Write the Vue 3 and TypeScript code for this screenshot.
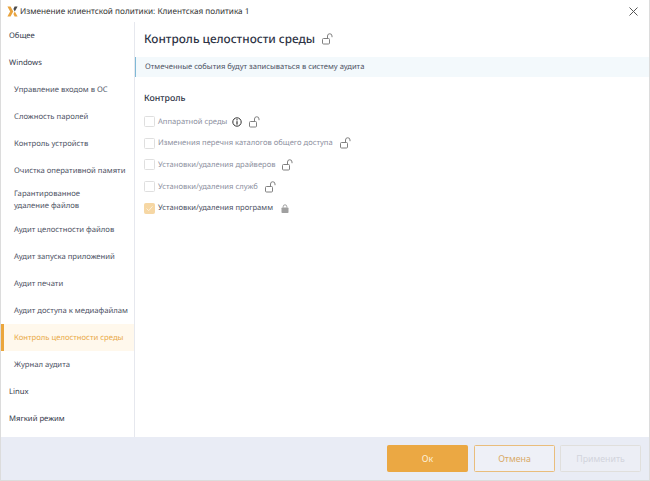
<script setup lang="ts">
interface NavItem { label: string; sub?: boolean; active?: boolean; tall?: boolean }
const nav: NavItem[] = [
  { label: 'Общее' },
  { label: 'Windows' },
  { label: 'Управление входом в ОС', sub: true },
  { label: 'Сложность паролей', sub: true },
  { label: 'Контроль устройств', sub: true },
  { label: 'Очистка оперативной памяти', sub: true },
  { label: 'Гарантированное удаление файлов', sub: true, tall: true },
  { label: 'Аудит целостности файлов', sub: true },
  { label: 'Аудит запуска приложений', sub: true },
  { label: 'Аудит печати', sub: true },
  { label: 'Аудит доступа к медиафайлам', sub: true },
  { label: 'Контроль целостности среды', sub: true, active: true },
  { label: 'Журнал аудита', sub: true },
  { label: 'Linux' },
  { label: 'Мягкий режим' },
]
const checks = [
  { label: 'Аппаратной среды', info: true },
  { label: 'Изменения перечня каталогов общего доступа' },
  { label: 'Установки/удаления драйверов' },
  { label: 'Установки/удаления служб' },
  { label: 'Установки/удаления программ', checked: true },
]
</script>

<template>
  <div class="win">
    <header class="titlebar">
      <svg class="logo" width="11" height="11" viewBox="0 0 13 13">
        <path d="M0.5 0.5H4.2L7.4 6.5L4.2 12.5H0.5L3.7 6.5Z" fill="#e8a33d" />
        <path d="M12.5 0.5H9L7.6 3.4L9.2 6.5Z" fill="#4a4a4a" />
        <path d="M12.5 12.5H9L7.6 9.6L9.2 6.5Z" fill="#e8a33d" />
      </svg>
      <span class="title">Изменение клиентской политики: Клиентская политика 1</span>
      <svg class="close" width="9" height="9" viewBox="0 0 9 9">
        <path d="M0.5 0.5L8.5 8.5M8.5 0.5L0.5 8.5" stroke="#555" stroke-width="1" fill="none" />
      </svg>
    </header>
    <div class="body">
      <nav class="side">
        <div
          v-for="n in nav"
          :key="n.label"
          class="item"
          :class="{ sub: n.sub, active: n.active, tall: n.tall }"
        >
          <span>{{ n.label }}</span>
        </div>
      </nav>
      <main class="main">
        <div class="head">
          <h1>Контроль целостности среды</h1>
          <svg class="lock big" width="12" height="12" viewBox="0 0 12 12">
            <rect x="0.5" y="5.5" width="7" height="5.5" rx="1" fill="none" stroke="#808080" />
            <path d="M5.5 5.5V3A2.2 2.2 0 0 1 10 3V4.2" fill="none" stroke="#808080" />
          </svg>
        </div>
        <div class="notice">Отмеченные события будут записываться в систему аудита</div>
        <h2>Контроль</h2>
        <ul class="list">
          <li v-for="c in checks" :key="c.label" class="row">
            <span class="box" :class="{ on: c.checked }">
              <svg v-if="c.checked" width="9" height="9" viewBox="0 0 9 9">
                <path d="M1.5 4.5L3.7 6.7L7.5 2.3" fill="none" stroke="#fdf0da" stroke-width="1" />
              </svg>
            </span>
            <span class="lbl" :class="{ dark: c.checked }">{{ c.label }}</span>
            <svg v-if="c.info" class="info" width="10" height="10" viewBox="0 0 10 10">
              <circle cx="5" cy="5" r="4.2" fill="none" stroke="#333" stroke-width="1" />
              <rect x="4.4" y="2.2" width="1.2" height="1.2" fill="#333" />
              <rect x="4.4" y="4.2" width="1.2" height="3.4" fill="#333" />
            </svg>
            <svg v-if="c.checked" class="closed" width="8" height="9" viewBox="0 0 8 9">
              <rect x="0.5" y="3.5" width="7" height="5.5" rx="0.8" fill="#a0a0a0" />
              <path d="M2.2 3.5V2.6A1.8 1.8 0 0 1 5.8 2.6V3.5" fill="none" stroke="#a0a0a0" stroke-width="1" />
            </svg>
            <svg v-else class="lock" width="12" height="12" viewBox="0 0 12 12">
              <rect x="0.5" y="5.5" width="7" height="5.5" rx="1" fill="none" stroke="#808080" />
              <path d="M5.5 5.5V3A2.2 2.2 0 0 1 10 3V4.2" fill="none" stroke="#808080" />
            </svg>
          </li>
        </ul>
      </main>
    </div>
    <footer class="foot">
      <button class="btn ok">Ок</button>
      <button class="btn cancel">Отмена</button>
      <button class="btn apply">Применить</button>
    </footer>
  </div>
</template>

<style>
html, body { margin: 0; padding: 0; background: #fff; }
</style>

<style scoped>
.win {
  width: 650px;
  height: 481px;
  box-sizing: border-box;
  border: 1px solid #dcdcdc;
  border-top: 0;
  display: flex;
  flex-direction: column;
  font-family: "Noto Sans", sans-serif;
  text-rendering: geometricPrecision;
  color: #33384a;
  background: #fff;
  overflow: hidden;
}
.titlebar {
  height: 22px;
  display: flex;
  align-items: center;
  padding: 0 10px 0 6px;
  flex: none;
}
.logo { margin-right: 2px; }
.title { font-size: 8.2px; color: #333; flex: 1; }
.close { margin-right: 1px; }
.body { flex: 1; display: flex; min-height: 0; }
.side {
  width: 133px;
  flex: none;
  border-right: 1px solid #e6e8ee;
}
.item {
  height: 27px;
  display: flex;
  align-items: center;
  padding-left: 8px;
  font-size: 7.7px;
  color: #33384a;
  box-sizing: border-box;
  line-height: 12px;
  white-space: nowrap;
}
.item.sub { padding-left: 13px; color: #4c5163; }
.item.tall { height: 32px; white-space: normal; padding-right: 32px; }
.item.active {
  background: #fff8ec;
  color: #e9a946;
  border-left: 3px solid #eba63c;
  padding-left: 10px;
}
.main { flex: 1; min-width: 0; }
.head {
  height: 34px;
  display: flex;
  align-items: center;
  padding-left: 9px;
}
h1 {
  margin: 0;
  font-size: 11.8px;
  font-weight: 500;
  color: #2e3345;
}
.lock.big { margin-left: 7px; }
.notice {
  margin-top: 1px;
  height: 20px;
  line-height: 20px;
  background: #f3f9fc;
  border-left: 1px solid #7fb9d6;
  padding-left: 9px;
  font-size: 7.6px;
  color: #4c5163;
}
h2 {
  margin: 14px 0 0 9px;
  font-size: 8.8px;
  font-weight: 500;
  color: #2e3345;
  line-height: 14px;
}
.list {
  list-style: none;
  margin: 6px 0 0 9px;
  padding: 0;
}
.row {
  height: 21.6px;
  display: flex;
  align-items: center;
}
.box {
  width: 9px;
  height: 9px;
  border: 1px solid #dfdfdf;
  border-radius: 1.5px;
  margin-right: 3px;
  display: flex;
  align-items: center;
  justify-content: center;
  flex: none;
}
.box.on { background: #f6d7a4; border-color: #f6d7a4; }
.lbl { font-size: 7.6px; color: #8d90a0; }
.lbl.dark { color: #4c5163; }
.info { margin-left: 5px; }
.row .lock { margin-left: 7px; }
.closed { margin-left: 8px; }
.foot {
  height: 43px;
  flex: none;
  background: #e9ecf5;
  display: flex;
  align-items: center;
  justify-content: flex-end;
  gap: 5px;
  padding-right: 8px;
}
.btn {
  width: 81px;
  height: 27px;
  border-radius: 1.5px;
  font-family: inherit;
  font-size: 8.8px;
  padding: 0;
  box-sizing: border-box;
}
.ok { background: #eba843; border: 1px solid #eba843; color: #fdf1dc; margin-right: 1px; }
.cancel { background: #eef0f7; border: 1px solid #e9bd7c; color: #d9aa68; }
.apply { background: #eceef5; border: 1px solid #e0dfdc; color: #d2d4dc; }
</style>
